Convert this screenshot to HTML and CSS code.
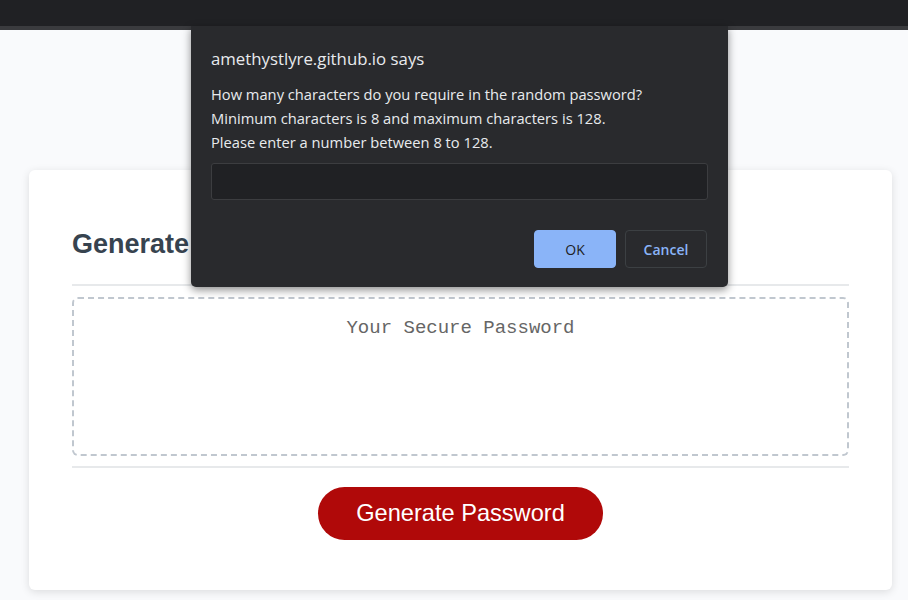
FILE: index.html
```html
<!DOCTYPE html>
<html lang="en">
<head>
<meta charset="utf-8">
<title>Password Generator</title>
<link rel="stylesheet" href="styles.css">
</head>
<body>
<div class="topbar"></div>
<div class="wrapper">
  <div class="card">
    <div class="card-header">
      <h2>Generate a Password</h2>
    </div>
    <div class="card-body">
      <textarea readonly class="password" placeholder="Your Secure Password" aria-label="Generated Password"></textarea>
    </div>
    <div class="card-footer">
      <button class="btn">Generate Password</button>
    </div>
  </div>
</div>

<div class="dialog" role="dialog">
  <div class="dialog-title">amethystlyre.github.io says</div>
  <div class="dialog-message">
    <div>How many characters do you require in the random password?</div>
    <div>Minimum characters is 8 and maximum characters is 128.</div>
    <div>Please enter a number between 8 to 128.</div>
  </div>
  <input class="dialog-input" type="text">
  <div class="dialog-actions">
    <button class="dbtn dbtn-ok">OK</button>
    <button class="dbtn dbtn-cancel">Cancel</button>
  </div>
</div>
</body>
</html>
```

FILE: styles.css
```css
* { box-sizing: border-box; }

html, body {
  margin: 0;
  padding: 0;
}

body {
  background: #f9fafc;
  font-family: "Liberation Sans", Arial, sans-serif;
  height: 600px;
  overflow: hidden;
  position: relative;
}

.topbar {
  height: 30px;
  background: #202124;
  border-bottom: 4px solid #3a3b3e;
}

.wrapper {
  padding: 140px 16px 0 29px;
}

.card {
  background: #ffffff;
  border-radius: 6px;
  box-shadow: rgba(0, 0, 0, 0.12) 0 2px 8px 0;
  color: #3b4852;
  padding: 30px 43px 30px;
}

.card-header h2 {
  margin: 29px 0 24px;
  font-size: 27px;
  line-height: 31px;
  font-weight: bold;
  color: #37434f;
}

.card-header::after,
.card-footer::before {
  content: "";
  display: block;
  height: 2px;
  background: #e7e9eb;
}

.password {
  display: block;
  width: 100%;
  height: 159px;
  margin: 11px 0 10px;
  padding: 18px 15px 14px;
  border: 2px dashed #c0c7cf;
  border-radius: 6px;
  font-family: "Liberation Mono", "DejaVu Sans Mono", monospace;
  font-size: 19px;
  line-height: 22px;
  text-align: center;
  resize: none;
  overflow: hidden;
  background: #fff;
  outline: none;
}

.password::placeholder {
  color: #666666;
}

.card-footer {
  text-align: center;
}

.btn {
  display: inline-block;
  margin: 19px 0 20px;
  height: 53px;
  padding: 0 38px;
  border: none;
  border-radius: 27px;
  background: #b00909;
  color: #ffffff;
  font-family: "Liberation Sans", Arial, sans-serif;
  font-size: 23.6px;
  line-height: 53px;
}

/* Browser prompt dialog overlay */
.dialog {
  position: absolute;
  left: 191px;
  top: 26px;
  width: 537px;
  height: 261px;
  background: #292a2d;
  border-radius: 0 0 5px 5px;
  box-shadow: 0 3px 8px rgba(0, 0, 0, 0.45);
  padding: 22px 20px 0;
  font-family: "Open Sans", "Noto Sans", sans-serif;
  color: #e8eaed;
}

.dialog-title {
  font-size: 16.8px;
  line-height: 22px;
  height: 22px;
}

.dialog-message {
  margin-top: 12px;
  font-size: 14.7px;
  line-height: 24px;
}

.dialog-input {
  display: block;
  width: 497px;
  height: 37px;
  margin-top: 9px;
  background: #202124;
  border: 1px solid #3c3d40;
  border-radius: 3px;
  outline: none;
}

.dialog-actions {
  display: flex;
  justify-content: flex-end;
  gap: 9px;
  margin-top: 30px;
  padding-right: 1px;
}

.dbtn {
  width: 82px;
  height: 38px;
  border-radius: 4px;
  font-family: "Open Sans", "Noto Sans", sans-serif;
  font-size: 14px;
  font-weight: 600;
}

.dbtn-ok {
  background: #8ab4f8;
  border: 1px solid #8ab4f8;
  color: #202124;
  font-weight: 500;
}

.dbtn-cancel {
  background: #292a2d;
  border: 1px solid #3c4043;
  color: #8ab4f8;
}
```
